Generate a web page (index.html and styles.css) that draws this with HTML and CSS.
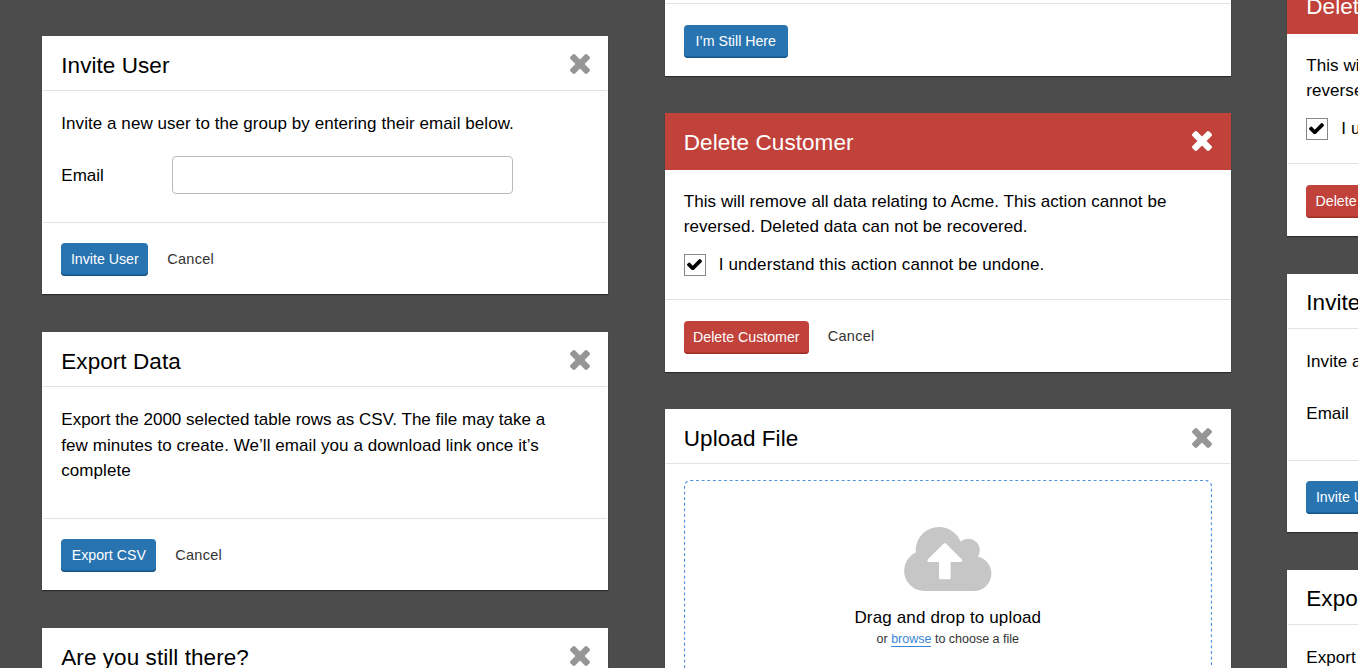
FILE: index.html
```
<!DOCTYPE html>
<html lang="en">
<head>
  <meta charset="UTF-8" />
  <meta name="viewport" content="width=device-width, initial-scale=1.0" />
  <title>Modals</title>
  <link rel="stylesheet" href="styles.css">
</head>
<body>
  <!-- shared icons -->
  <svg class="sprite" width="0" height="0">
    <symbol id="times" viewBox="302 366 1188 1188">
      <path d="M1490 1322q0 40-28 68l-136 136q-28 28-68 28t-68-28l-294-294-294 294q-28 28-68 28t-68-28l-136-136q-28-28-28-68t28-68l294-294-294-294q-28-28-28-68t28-68l136-136q28-28 68-28t68 28l294 294 294-294q28-28 68-28t68 28l136 136q28 28 28 68t-28 68l-294 294 294 294q28 28 28 68z"/>
    </symbol>
    <symbol id="check" viewBox="121 334 1550 1188">
      <path d="M1671 566q0 40-28 68l-724 724-136 136q-28 28-68 28t-68-28l-136-136-362-362q-28-28-28-68t28-68l136-136q28-28 68-28t68 28l294 295 656-657q28-28 68-28t68 28l136 136q28 28 28 68z"/>
    </symbol>
  </svg>

  <div class="board">
    <div class="column column-1">
      <div class="modal">
        <div class="modal-header">
          <h2>Invite User</h2>
          <svg class="close"><use href="#times"/></svg>
        </div>
        <div class="modal-body">
          <p>Invite a new user to the group by entering their email below.</p>
          <div class="field">
            <label for="email">Email</label>
            <input type="text" id="email" />
          </div>
        </div>
        <div class="modal-footer">
          <button class="btn btn-invite">Invite User</button>
          <a class="cancel">Cancel</a>
        </div>
      </div>

      <div class="modal">
        <div class="modal-header">
          <h2>Export Data</h2>
          <svg class="close"><use href="#times"/></svg>
        </div>
        <div class="modal-body">
          <p><span class="tight">Export the 2000 selected table rows as CSV. The file may take a</span><br>few minutes to create. We’ll email you a download link once it’s<br>complete</p>
        </div>
        <div class="modal-footer">
          <button class="btn btn-export">Export CSV</button>
          <a class="cancel">Cancel</a>
        </div>
      </div>

      <div class="modal">
        <div class="modal-header">
          <h2>Are you still there?</h2>
          <svg class="close"><use href="#times"/></svg>
        </div>
      </div>
    </div>

    <div class="column column-2">
      <div class="modal modal-tail">
        <div class="modal-footer">
          <button class="btn btn-here">I’m Still Here</button>
        </div>
      </div>

      <div class="modal modal-danger">
        <div class="modal-header">
          <h2>Delete Customer</h2>
          <svg class="close"><use href="#times"/></svg>
        </div>
        <div class="modal-body">
          <p>This will remove all data relating to Acme. This action cannot be<br>reversed. Deleted data can not be recovered.</p>
          <div class="confirm">
            <span class="checkbox"><svg><use href="#check"/></svg></span>
            <span>I understand this action cannot be undone.</span>
          </div>
        </div>
        <div class="modal-footer">
          <button class="btn btn-danger">Delete Customer</button>
          <a class="cancel">Cancel</a>
        </div>
      </div>

      <div class="modal modal-upload">
        <div class="modal-header">
          <h2>Upload File</h2>
          <svg class="close"><use href="#times"/></svg>
        </div>
        <div class="dropzone">
          <svg class="outline"><rect x="0.5" y="0.5" width="527" height="260" rx="6"/></svg>
          <svg class="cloud" viewBox="0 128 1920 1408">
            <path d="M1280 864q0-14-9-23l-352-352q-9-9-23-9t-23 9l-351 351q-10 12-10 24 0 14 9 23t23 9h224v352q0 13 9.500 22.500t22.500 9.500h192q13 0 22.500-9.500t9.500-22.500v-352h224q13 0 22.500-9.500t9.500-22.500zm640 288q0 159-112.500 271.500t-271.500 112.500h-1088q-185 0-316.500-131.500t-131.500-316.500q0-130 70-240t188-165q-2-30-2-43 0-212 150-362t362-150q156 0 285.500 87t188.500 231q71-62 166-62 106 0 181 75t75 181q0 76-41 138 130 31 213.500 135.500t83.500 238.500z"/>
          </svg>
          <p class="drop-title">Drag and drop to upload</p>
          <p class="drop-hint">or <a>browse</a> to choose a file</p>
        </div>
      </div>
    </div>

    <div class="column column-3">
      <div class="modal modal-danger">
        <div class="modal-header">
          <h2>Delete Customer</h2>
        </div>
        <div class="modal-body">
          <p>This will remove all data relating to Acme. This action cannot be<br>reversed. Deleted data can not be recovered.</p>
          <div class="confirm">
            <span class="checkbox"><svg><use href="#check"/></svg></span>
            <span>I understand this action cannot be undone.</span>
          </div>
        </div>
        <div class="modal-footer">
          <button class="btn btn-danger">Delete Customer</button>
        </div>
      </div>

      <div class="modal">
        <div class="modal-header">
          <h2>Invite User</h2>
        </div>
        <div class="modal-body">
          <p>Invite a new user to the group by entering their email below.</p>
          <div class="field">
            <label>Email</label>
          </div>
        </div>
        <div class="modal-footer">
          <button class="btn btn-invite">Invite User</button>
        </div>
      </div>

      <div class="modal">
        <div class="modal-header">
          <h2>Export Data</h2>
        </div>
        <div class="modal-body">
          <p>Export the 2000 selected table rows as CSV.</p>
        </div>
      </div>
    </div>
  </div>
</body>
</html>
```
FILE: styles.css
```
* {
  box-sizing: border-box;
}

body {
  font-family: "Liberation Sans", Arial, sans-serif;
  background-color: #4c4c4c;
  color: #000;
  margin: 0;
  height: 668px;
  overflow: hidden;
}

.sprite {
  display: block;
}

.board {
  display: flex;
  align-items: flex-start;
  gap: 56.5px;
  height: 668px;
  padding-left: 42.300px;
  overflow: hidden;
}

.column {
  display: flex;
  flex-direction: column;
  flex: none;
  gap: 38px;
  width: 566px;
}

.column-1 {
  padding-top: 36px;
}

.column-2 {
  gap: 37.600px;
}

.column-3 {
  margin-top: -22px;
}

.modal {
  display: flex;
  flex-direction: column;
  height: 258.300px;
  background-color: white;
  box-shadow: 0 1px 1px rgba(0, 0, 0, 0.4);
}

.column-1 .modal,
.column-3 .modal {
  height: 258px;
}

.modal-header {
  display: flex;
  justify-content: space-between;
  align-items: center;
  height: 55px;
  margin: 0 1px;
  padding: 3px 17.500px 0 18px;
  border-bottom: 1px solid #e2e2e2;
}

h2 {
  margin: 0;
  padding-top: 3px;
  font-size: 22.500px;
  font-weight: normal;
  letter-spacing: 0.06px;
  white-space: nowrap;
}

.column-3 h2 {
  padding-top: 1px;
}

.close {
  width: 20px;
  height: 20px;
  margin-bottom: 1px;
  fill: #969696;
}

.modal-body {
  flex: 1;
  padding: 20px 19px 0;
}

p {
  margin: 0;
  font-size: 17px;
  line-height: 25.500px;
  letter-spacing: 0.06px;
  white-space: nowrap;
}

.tight {
  letter-spacing: 0;
}

.field {
  display: flex;
  align-items: center;
  height: 38px;
  margin-top: 19px;
}

.field label {
  width: 111px;
  padding-top: 2px;
  font-size: 17px;
}

.field input {
  width: 341px;
  height: 38px;
  border: 1px solid #bbb;
  border-radius: 4px;
}

.modal-footer {
  display: flex;
  align-items: center;
  height: 72px;
  margin: 0 1px;
  padding: 3px 18px 0;
  border-top: 1px solid #e2e2e2;
}

.btn {
  height: 33px;
  padding: 0 0 1px;
  border: none;
  border-radius: 4px;
  background-color: #2874b0;
  box-shadow: inset 0 -1.500px 0 #15568a;
  color: white;
  font-family: inherit;
  font-size: 14.200px;
}

.column-1 .btn,
.column-3 .btn {
  margin-bottom: 1px;
}

.btn-invite {
  width: 87px;
}

.btn-export {
  width: 95px;
}

.btn-here {
  width: 104px;
}

.btn-danger {
  width: 125px;
  background-color: #c1423a;
  box-shadow: inset 0 -1.500px 0 #9d2f28;
}

.cancel {
  margin-left: 19px;
  padding-bottom: 2px;
  font-size: 14.500px;
  letter-spacing: 0.25px;
  color: #333;
}

/* Last part of a modal that runs off the top */
.modal-tail {
  justify-content: flex-end;
  height: 75.700px;
}

.modal-tail .modal-footer,
.modal-danger .modal-footer {
  height: 72.700px;
}

.modal-danger .modal-header {
  height: 56.400px;
  margin: 0;
  padding: 1px 18.500px 0 19px;
  border: none;
  background-color: #c1423a;
  color: white;
}

.modal-danger .close {
  fill: white;
}

.modal-danger .modal-body {
  padding-top: 19px;
}

.column-3 .modal-danger .modal-header {
  height: 56px;
}

.column-3 .modal-danger .modal-body {
  padding-top: 18.500px;
}

.confirm {
  display: flex;
  align-items: center;
  gap: 13px;
  margin-top: 14px;
  font-size: 17px;
  letter-spacing: 0.1px;
  white-space: nowrap;
}

.checkbox {
  display: flex;
  justify-content: center;
  align-items: center;
  width: 22px;
  height: 22px;
  padding-right: 1px;
  border: 1px solid #888;
}

.checkbox svg {
  width: 15px;
  height: 11.500px;
}

.modal-upload {
  height: 340px;
}

.modal-upload .close {
  margin-bottom: 0;
}

.dropzone {
  position: relative;
  display: flex;
  flex-direction: column;
  align-items: center;
  margin: 16px 19px 0;
  padding-top: 47px;
  height: 261px;
}

.outline {
  position: absolute;
  top: 0;
  left: 0;
  width: 528px;
  height: 261px;
  fill: none;
  stroke: #4a8fdc;
  stroke-width: 1.200;
  stroke-dasharray: 2.800 2.800;
}

.cloud {
  width: 87.500px;
  height: 64px;
  fill: #c6c6c6;
}

.drop-title {
  margin-top: 14px;
  letter-spacing: 0.15px;
}

.drop-hint {
  font-size: 12.500px;
  line-height: 16px;
  letter-spacing: 0;
  color: #333;
}

.drop-hint a {
  color: #3a87d9;
  border-bottom: 1px solid #3a87d9;
}
```
